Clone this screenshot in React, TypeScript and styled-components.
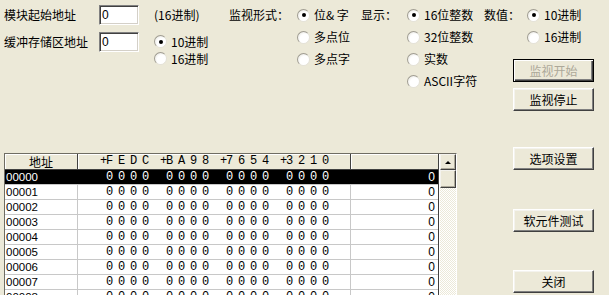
import React from 'react';
import styled, { createGlobalStyle, css } from 'styled-components';

const Global = createGlobalStyle`
  html, body { margin: 0; padding: 0; background: #ece9d8; }
  body {
    font-family: "Noto Sans CJK SC", "Liberation Sans", sans-serif;
    font-size: 12px;
    color: #000;
  }
  * { box-sizing: border-box; }
`;

const Window = styled.div`
  width: 609px;
  height: 295px;
  overflow: hidden;
  display: flex;
  flex-direction: column;
  background: #ece9d8;
`;

const Top = styled.div`
  display: flex;
  align-items: flex-start;
  height: 147px;
  padding-left: 4px;
  flex-shrink: 0;
`;

const AddrGrid = styled.div`
  display: grid;
  grid-template-columns: 95px 40px;
  grid-template-rows: 20px 20px;
  row-gap: 7px;
  align-items: center;
  margin-top: 5px;
`;

const FieldLabel = styled.div`
  line-height: 20px;
  white-space: nowrap;
`;

const TextBox = styled.input`
  width: 40px;
  height: 20px;
  margin: 0;
  padding: 0 0 0 2px;
  background: #fff;
  border: 1px solid;
  border-color: #808080 #fff #fff #808080;
  box-shadow: inset 1px 1px #404040, inset -1px -1px #d4d0c8;
  font-family: "Liberation Sans", sans-serif;
  font-size: 12px;
  color: #000;
  outline: none;
`;

const HexCol = styled.div`
  width: 75px;
  margin-left: 15px;
  margin-top: 5px;
  display: flex;
  flex-direction: column;
`;

const HexNote = styled.div`
  height: 20px;
  line-height: 20px;
  white-space: nowrap;
`;

const HexRadios = styled.div`
  margin-top: 8px;
  display: flex;
  flex-direction: column;
`;

const Group = styled.div`
  display: flex;
  align-items: flex-start;
  margin-top: 4px;
`;

const GroupLabel = styled.div<{ $w: number }>`
  width: ${p => p.$w}px;
  height: 22px;
  line-height: 22px;
  white-space: nowrap;
`;

const RadioList = styled.div<{ $w?: number }>`
  ${p => p.$w && css`width: ${p.$w}px;`}
  display: flex;
  flex-direction: column;
`;

const RadioRow = styled.div<{ $h: number }>`
  display: flex;
  align-items: center;
  gap: 4px;
  height: ${p => p.$h}px;
  line-height: ${p => p.$h}px;
  white-space: nowrap;
`;

const RadioCircle = styled.span<{ $on?: boolean }>`
  position: relative;
  width: 13px;
  height: 13px;
  flex-shrink: 0;
  border-radius: 50%;
  border: 1px solid;
  border-color: #a09d92 #e4e2d8 #e4e2d8 #a09d92;
  background: radial-gradient(circle at 62% 62%, #ffffff 48%, #deddd4 100%);
  ${p => p.$on && css`
    &::after {
      content: "";
      position: absolute;
      left: 3.5px;
      top: 3.5px;
      width: 4px;
      height: 4px;
      border-radius: 50%;
      background: #000;
    }
  `}
`;

const Radio: React.FC<{ label: string; on?: boolean; h?: number }> = ({ label, on, h = 22 }) => (
  <RadioRow $h={h}>
    <RadioCircle $on={on} />
    <span>{label}</span>
  </RadioRow>
);

const ValueCol = styled.div`
  display: flex;
  flex-direction: column;
`;

const StackedButtons = styled.div`
  display: flex;
  flex-direction: column;
  gap: 6px;
  margin-left: 29px;
  margin-top: 11px;
`;

const Btn = styled.button<{ $default?: boolean }>`
  width: 81px;
  height: 23px;
  padding: 0;
  margin: 0;
  background: #ece9d8;
  font-family: "Noto Sans CJK SC", "Liberation Sans", sans-serif;
  font-size: 12px;
  color: #000;
  border: 1px solid;
  border-color: #fff #404040 #404040 #fff;
  box-shadow: inset -1px -1px #808080, inset 1px 1px #f4f3ee;
  &:disabled {
    color: #aca899;
  }
  ${p => p.$default && css`
    border-color: #000;
    box-shadow: inset 1px 1px #fff, inset -1px -1px #404040, inset -2px -2px #808080;
  `}
`;

const Bottom = styled.div`
  display: flex;
  align-items: flex-start;
  padding-left: 4px;
  flex: 1;
`;

const Frame = styled.div`
  margin-top: 6px;
  width: 453px;
  height: 150px;
  border: 1px solid;
  border-color: #6f6d63 #fff #fff #6f6d63;
  display: flex;
  gap: 1px;
  background: #fff;
`;

const Grid = styled.div`
  width: 435px;
  display: flex;
  flex-direction: column;
  border-right: 1px solid #404040;
`;

const HeadRow = styled.div`
  display: grid;
  grid-template-columns: 73px 273px 1fr;
  height: 16px;
  background: #ece9d8;
  border-bottom: 1px solid #404040;
`;

const monoText = css`
  padding-left: 22px;
  font-family: "Liberation Mono", monospace;
  font-size: 12px;
  letter-spacing: -1.2px;
`;

const HeadCell = styled.div<{ $mono?: boolean }>`
  height: 15px;
  line-height: 15px;
  border-right: 1px solid #404040;
  box-shadow: inset 1px 1px #fff;
  white-space: pre;
  overflow: hidden;
  ${p => p.$mono ? monoText : css`text-align: center;`}
  &:last-child { border-right: none; }
`;

const DataRow = styled.div<{ $sel?: boolean }>`
  display: grid;
  grid-template-columns: 73px 273px 1fr;
  height: 15px;
  flex-shrink: 0;
  border-bottom: 1px solid #c8c8c8;
  background: ${p => (p.$sel ? '#000' : '#fff')};
  color: ${p => (p.$sel ? '#fff' : '#000')};
`;

const Cell = styled.div<{ $kind: 'addr' | 'bits' | 'val'; $sel?: boolean }>`
  height: 14px;
  line-height: 14px;
  white-space: pre;
  overflow: hidden;
  border-right: 1px solid ${p => (p.$sel ? '#000' : '#c8c8c8')};
  ${p => p.$kind === 'addr' && css`
    padding-left: 1px;
    font-family: "Liberation Sans", sans-serif;
    font-size: 11.5px;
  `}
  ${p => p.$kind === 'bits' && monoText}
  ${p => p.$kind === 'val' && css`
    text-align: right;
    padding-right: 3px;
    border-right: none;
    font-family: "Liberation Sans", sans-serif;
    font-size: 12px;
  `}
`;

const ScrollBar = styled.div`
  width: 16px;
  display: flex;
  flex-direction: column;
  background: repeating-conic-gradient(#ffffff 0 25%, #ece9d8 0 50%) 0 0 / 2px 2px;
`;

const ScrollBtn = styled.div<{ $h: number }>`
  height: ${p => p.$h}px;
  background: #ece9d8;
  border: 1px solid;
  border-color: #f4f3ee #404040 #404040 #f4f3ee;
  box-shadow: inset -1px -1px #aca899;
  display: flex;
  align-items: center;
  justify-content: center;
`;

const UpArrow = styled.span`
  width: 0;
  height: 0;
  border-left: 3px solid transparent;
  border-right: 3px solid transparent;
  border-bottom: 3px solid #000;
`;

const SideButtons = styled.div`
  display: flex;
  flex-direction: column;
  margin-left: 56px;
`;

const SideGap = styled.div<{ $h: number }>`
  height: ${p => p.$h}px;
`;

const rows = ['00000', '00001', '00002', '00003', '00004', '00005', '00006', '00007', '00008'];
const BITS = ' 0 0 0 0   0 0 0 0   0 0 0 0   0 0 0 0';
const HEAD_BITS = '+F E D C  +B A 9 8  +7 6 5 4  +3 2 1 0';

export default function App() {
  return (
    <>
      <Global />
      <Window>
        <Top>
          <AddrGrid>
            <FieldLabel>模块起始地址</FieldLabel>
            <TextBox readOnly value="0" />
            <FieldLabel>缓冲存储区地址</FieldLabel>
            <TextBox readOnly value="0" />
          </AddrGrid>
          <HexCol>
            <HexNote>(16进制)</HexNote>
            <HexRadios>
              <Radio label="10进制" on h={17} />
              <Radio label="16进制" h={17} />
            </HexRadios>
          </HexCol>
          <Group>
            <GroupLabel $w={68}>监视形式：</GroupLabel>
            <RadioList $w={64}>
              <Radio label="位& 字" on />
              <Radio label="多点位" />
              <Radio label="多点字" />
            </RadioList>
          </Group>
          <Group>
            <GroupLabel $w={46}>显示：</GroupLabel>
            <RadioList $w={77}>
              <Radio label="16位整数" on />
              <Radio label="32位整数" />
              <Radio label="实数" />
              <Radio label="ASCII字符" />
            </RadioList>
          </Group>
          <ValueCol>
            <Group>
              <GroupLabel $w={43}>数值：</GroupLabel>
              <RadioList>
                <Radio label="10进制" on />
                <Radio label="16进制" />
              </RadioList>
            </Group>
            <StackedButtons>
              <Btn $default disabled>监视开始</Btn>
              <Btn>监视停止</Btn>
            </StackedButtons>
          </ValueCol>
        </Top>
        <Bottom>
          <Frame>
            <Grid>
              <HeadRow>
                <HeadCell>地址</HeadCell>
                <HeadCell $mono>{HEAD_BITS}</HeadCell>
                <HeadCell />
              </HeadRow>
              {rows.map((addr, i) => (
                <DataRow key={addr} $sel={i === 0}>
                  <Cell $kind="addr" $sel={i === 0}>{addr}</Cell>
                  <Cell $kind="bits" $sel={i === 0}>{BITS}</Cell>
                  <Cell $kind="val" $sel={i === 0}>0</Cell>
                </DataRow>
              ))}
            </Grid>
            <ScrollBar>
              <ScrollBtn $h={16}><UpArrow /></ScrollBtn>
              <ScrollBtn $h={18} />
            </ScrollBar>
          </Frame>
          <SideButtons>
            <Btn>选项设置</Btn>
            <SideGap $h={39} />
            <Btn>软元件测试</Btn>
            <SideGap $h={38} />
            <Btn>关闭</Btn>
          </SideButtons>
        </Bottom>
      </Window>
    </>
  );
}
